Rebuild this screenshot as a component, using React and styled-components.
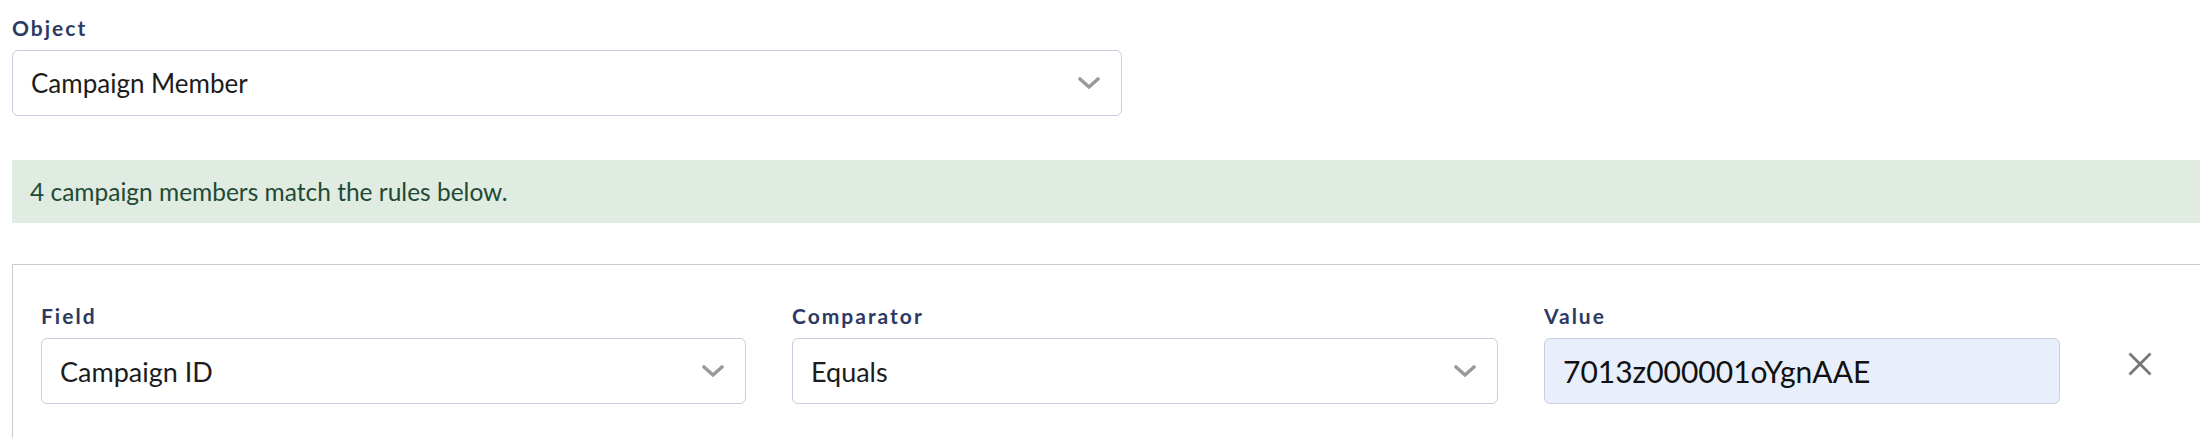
import styled, { createGlobalStyle } from "styled-components";

const GlobalStyle = createGlobalStyle`
  html, body {
    margin: 0;
    padding: 0;
    background: #ffffff;
    overflow: hidden;
  }
  body {
    font-family: Lato, "Noto Sans", "Liberation Sans", sans-serif;
    color: #181818;
  }
  * {
    box-sizing: border-box;
  }
`;

const Page = styled.div`
  width: 2220px;
  padding: 13px 0 0 12px;
  box-sizing: content-box;
`;

const Label = styled.div`
  font-size: 21px;
  line-height: 30px;
  font-weight: 700;
  letter-spacing: 2px;
  color: #2c3a63;
  margin-bottom: 7px;
`;

const SelectBox = styled.div`
  display: flex;
  align-items: center;
  justify-content: space-between;
  width: ${(props) => props.width || "100%"};
  height: 66px;
  padding: 0 21px 0 18px;
  border: 1px solid #c8cde0;
  border-radius: 6px;
  background: ${(props) => (props.filled ? "#e8effb" : "#ffffff")};
  font-size: ${(props) => props.size || "26px"};
  color: ${(props) => (props.filled ? "#111111" : "#1c1c1c")};
  white-space: nowrap;
`;

const Banner = styled.div`
  margin-top: 44px;
  height: 63px;
  display: flex;
  align-items: center;
  padding-left: 18px;
  background: #e0ebe2;
  color: #1f4a33;
  font-size: 24.5px;
`;

const RulesBox = styled.div`
  margin-top: 41px;
  border: 1px solid #cbcbcb;
  padding: 36px 28px 40px;
`;

const RuleRow = styled.div`
  display: grid;
  grid-template-columns: 705px 706px 516px 1fr;
  column-gap: 46px;
  align-items: end;
`;

const RemoveCell = styled.div`
  height: 66px;
  display: flex;
  align-items: center;
  padding: 0 0 15px 22px;
`;

const RemoveButton = styled.button`
  border: none;
  background: none;
  padding: 0;
  display: flex;
  cursor: pointer;
  color: #767676;
`;

const Chevron = () => (
  <svg width="22" height="12" viewBox="0 0 22 12">
    <polyline
      points="2,2 11,10 20,2"
      fill="none"
      stroke="#9b9b9b"
      strokeWidth="3.6"
      strokeLinecap="round"
      strokeLinejoin="round"
    />
  </svg>
);

const Cross = () => (
  <svg width="24" height="24" viewBox="0 0 24 24">
    <path d="M1.5 1.5 L22.5 22.5 M22.5 1.5 L1.5 22.5" stroke="currentColor" strokeWidth="2.8" />
  </svg>
);

const Field = ({ label, value, filled, dropdown, size }) => (
  <div>
    <Label>{label}</Label>
    <SelectBox filled={filled} size={size}>
      <span>{value}</span>
      {dropdown && <Chevron />}
    </SelectBox>
  </div>
);

const App = () => {
  return (
    <>
      <GlobalStyle />
      <Page>
        <Label>Object</Label>
        <SelectBox width="50%">
          <span>Campaign Member</span>
          <Chevron />
        </SelectBox>
        <Banner>4 campaign members match the rules below.</Banner>
        <RulesBox>
          <RuleRow>
            <Field label="Field" value="Campaign ID" size="27px" dropdown />
            <Field label="Comparator" value="Equals" size="27px" dropdown />
            <Field label="Value" value="7013z000001oYgnAAE" size="30px" filled />
            <RemoveCell>
              <RemoveButton aria-label="Remove rule">
                <Cross />
              </RemoveButton>
            </RemoveCell>
          </RuleRow>
        </RulesBox>
      </Page>
    </>
  );
};

export default App;
